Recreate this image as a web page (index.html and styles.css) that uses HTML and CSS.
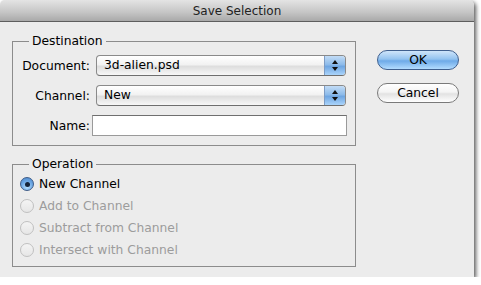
FILE: index.html
```html
<!DOCTYPE html>
<html lang="en">
<head>
  <meta charset="UTF-8">
  <title>Save Selection</title>
  <link rel="stylesheet" href="styles.css">
</head>
<body>
  <div class="window">
    <div class="titlebar">Save Selection</div>

    <div class="content">
      <div class="groups">
        <fieldset class="group dest">
          <legend>Destination</legend>
          <div class="form-grid">
            <label>Document:</label>
            <div class="popup">
              <span class="popup-value">3d-alien.psd</span>
              <span class="arrows"><i class="up"></i><i class="down"></i></span>
            </div>

            <label>Channel:</label>
            <div class="popup">
              <span class="popup-value">New</span>
              <span class="arrows"><i class="up"></i><i class="down"></i></span>
            </div>

            <label>Name:</label>
            <input type="text" class="name-field">
          </div>
        </fieldset>

        <fieldset class="group op">
          <legend>Operation</legend>
          <div class="radio checked"><span class="dot"></span>New Channel</div>
          <div class="radio disabled"><span class="dot"></span>Add to Channel</div>
          <div class="radio disabled"><span class="dot"></span>Subtract from Channel</div>
          <div class="radio disabled"><span class="dot"></span>Intersect with Channel</div>
        </fieldset>
      </div>

      <div class="actions">
        <button type="button" class="btn default">OK</button>
        <button type="button" class="btn">Cancel</button>
      </div>
    </div>
  </div>
</body>
</html>
```

FILE: styles.css
```css
body {
  margin: 0;
  background: #fff;
  font-family: "DejaVu Sans", sans-serif;
  font-size: 12.3px;
  color: #000;
}

.window {
  width: 474px;
  height: 277px;
  background: #ececec;
  border-radius: 5px 5px 0 0;
  box-shadow: 2px 2px 4px rgba(0, 0, 0, 0.65);
  overflow: hidden;
}

.titlebar {
  height: 21px;
  line-height: 22px;
  text-align: center;
  font-size: 12px;
  color: #222;
  background: linear-gradient(#e4e4e4, #c4c4c4 60%, #a9a9a9);
  border-bottom: 1px solid #5e5e5e;
}

.content {
  display: flex;
  padding: 12px 0 0 12px;
}

.groups {
  width: 344px;
}

.group {
  margin: 0;
  padding: 0;
  border: 1px solid #8c8c8c;
  min-width: 0;
}

.group legend {
  margin-left: 16px;
  padding: 0 3px;
  line-height: 15px;
}

.form-grid {
  display: grid;
  grid-template-columns: 77px 1fr;
  column-gap: 6px;
  row-gap: 9px;
  padding: 6px 0 9px;
  align-items: center;
}

.form-grid label {
  text-align: right;
}

.popup {
  width: 248px;
  height: 19px;
  display: flex;
  border: 1px solid #8a8a8a;
  border-bottom-color: #6e6e6e;
  border-radius: 4px;
  overflow: hidden;
  background: linear-gradient(#ffffff, #f2f2f2 45%, #dedede 55%, #f7f7f7);
}

.popup-value {
  flex: 1;
  padding-left: 7px;
  line-height: 19px;
}

.arrows {
  width: 20px;
  display: flex;
  flex-direction: column;
  align-items: center;
  justify-content: center;
  gap: 3px;
  border-left: 1px solid #7d9cc4;
  background: linear-gradient(#c2dcf6, #8dbbea 45%, #6fa6e2 55%, #aad4fb);
}

.arrows i {
  width: 0;
  height: 0;
  border-left: 3px solid transparent;
  border-right: 3px solid transparent;
}

.arrows .up {
  border-bottom: 4px solid #111;
}

.arrows .down {
  border-top: 4px solid #111;
}

.name-field {
  width: 255px;
  height: 21px;
  margin: 0 0 0 -4px;
  padding: 0;
  box-sizing: border-box;
  border: 1px solid #9a9a9a;
  border-top-color: #6f6f6f;
  background: #fff;
}

.op {
  margin-top: 11px;
  padding: 1px 0 5px;
}

.radio {
  height: 22px;
  display: flex;
  align-items: center;
  gap: 5px;
  padding-left: 7px;
}

.radio .dot {
  width: 14px;
  height: 14px;
  box-sizing: border-box;
  border-radius: 50%;
  display: flex;
  align-items: center;
  justify-content: center;
}

.radio.checked .dot {
  border: 1px solid #3d5c88;
  background: radial-gradient(circle at 50% 75%, #b7e0ff, #6aa6e4 55%, #4d86c8);
}

.radio.checked .dot::after {
  content: "";
  width: 5px;
  height: 5px;
  border-radius: 50%;
  background: #15243a;
}

.radio.disabled {
  color: #9c9c9c;
}

.radio.disabled .dot {
  border: 1px solid #c0c0c0;
  background: linear-gradient(#f4f4f4, #e6e6e6);
}

.actions {
  display: flex;
  flex-direction: column;
  gap: 13px;
  margin: 16px 0 0 21px;
}

.btn {
  width: 82px;
  height: 20px;
  padding: 0;
  border: 1px solid #7a7a7a;
  border-radius: 10px;
  font-family: inherit;
  font-size: 12.3px;
  color: #000;
  background: linear-gradient(#ffffff, #f4f4f4 45%, #e2e2e2 55%, #ffffff);
}

.btn.default {
  border-color: #3f5f8e;
  background: linear-gradient(#cfe5fa, #93c3f0 45%, #6eaae8 55%, #b3dcff);
}
```
